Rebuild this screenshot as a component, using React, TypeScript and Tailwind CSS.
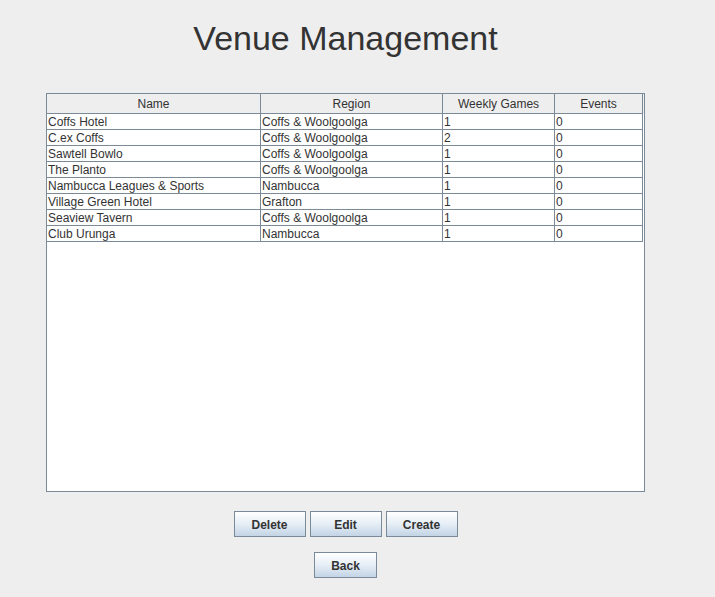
import React from 'react';

type Venue = {
  name: string;
  region: string;
  weekly: number;
  events: number;
};

const venues: Venue[] = [
  { name: 'Coffs Hotel', region: 'Coffs & Woolgoolga', weekly: 1, events: 0 },
  { name: 'C.ex Coffs', region: 'Coffs & Woolgoolga', weekly: 2, events: 0 },
  { name: 'Sawtell Bowlo', region: 'Coffs & Woolgoolga', weekly: 1, events: 0 },
  { name: 'The Planto', region: 'Coffs & Woolgoolga', weekly: 1, events: 0 },
  { name: 'Nambucca Leagues & Sports', region: 'Nambucca', weekly: 1, events: 0 },
  { name: 'Village Green Hotel', region: 'Grafton', weekly: 1, events: 0 },
  { name: 'Seaview Tavern', region: 'Coffs & Woolgoolga', weekly: 1, events: 0 },
  { name: 'Club Urunga', region: 'Nambucca', weekly: 1, events: 0 },
];

const cols = 'grid grid-cols-[214px_182px_112px_88px]';
const headers = ['Name', 'Region', 'Weekly Games', 'Events'];

function SwingButton({ label, width }: { label: string; width: string }) {
  return (
    <button
      className={`${width} h-[26px] border border-[#7a8a99] bg-gradient-to-b from-[#ffffff] via-[#e6eef6] to-[#c3d4e5] text-[12px] leading-[14px] pt-[1px] font-bold text-[#333333] flex items-center justify-center`}
    >
      {label}
    </button>
  );
}

export default function App() {
  return (
    <div className="min-h-[597px] w-[715px] bg-[#eeeeee] font-['Liberation_Sans',Arial,sans-serif] text-[#333333]">
      <div className="ml-[46px] w-[599px] flex flex-col items-center">
        <h1 className="pt-[19px] text-[34px] leading-[39px] text-[#333333] w-full text-center">
          Venue Management
        </h1>

        <div className="mt-[35px] w-[599px] h-[399px] border border-[#7a8a99] bg-white flex flex-col">
          <div className="flex bg-[#eeeeee]">
            <div className={cols}>
              {headers.map((h) => (
                <div
                  key={h}
                  className="h-[20px] border-r border-b border-[#7a8a99] text-[12px] leading-[21px] text-center"
                >
                  {h}
                </div>
              ))}
            </div>
          </div>
          {venues.map((v) => (
            <div key={v.name} className={cols}>
              {[v.name, v.region, String(v.weekly), String(v.events)].map((c, i) => (
                <div
                  key={i}
                  className="h-[16px] border-r border-b border-[#7a8a99] pl-[1px] pt-[1px] text-[12px] leading-[14px] whitespace-nowrap overflow-hidden"
                >
                  {c}
                </div>
              ))}
            </div>
          ))}
        </div>

        <div className="mt-[19px] flex gap-[4px]">
          <SwingButton label="Delete" width="w-[72px]" />
          <SwingButton label="Edit" width="w-[72px]" />
          <SwingButton label="Create" width="w-[72px]" />
        </div>
        <div className="mt-[15px] flex">
          <SwingButton label="Back" width="w-[63px]" />
        </div>
      </div>
    </div>
  );
}
